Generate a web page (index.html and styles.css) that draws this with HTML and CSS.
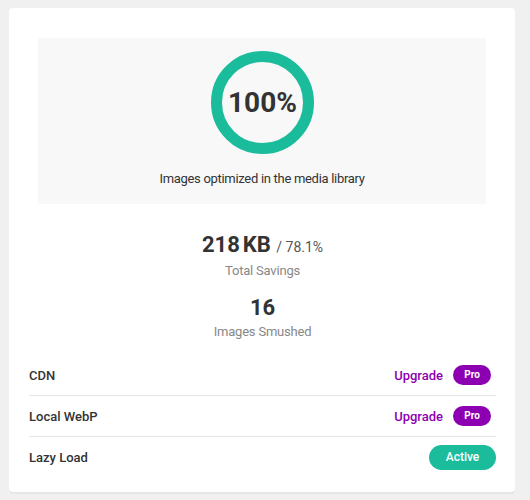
FILE: index.html
```html
<!DOCTYPE html>
<html lang="en">
<head>
    <meta charset="UTF-8">
    <meta name="viewport" content="width=device-width, initial-scale=1.0">
    <title>Smush Summary</title>
    <link rel="stylesheet" href="styles.css">
</head>
<body>

<div class="card">
    <div class="score-box">
        <div class="score-ring">
            <svg width="103" height="103" viewBox="0 0 103 103">
                <circle cx="51.5" cy="51.5" r="46" fill="none" stroke="#1abc9c" stroke-width="11"/>
            </svg>
            <span class="score-value">100%</span>
        </div>
        <p class="score-label">Images optimized in the media library</p>
    </div>

    <div class="stats">
        <div class="stat">
            <div class="stat-value">218<span class="unit">KB</span> <span class="stat-extra">/ 78.1%</span></div>
            <div class="stat-label">Total Savings</div>
        </div>

        <div class="stat">
            <div class="stat-value">16</div>
            <div class="stat-label">Images Smushed</div>
        </div>
    </div>

    <div class="features">
        <div class="feature">
            <span class="feature-name">CDN</span>
            <span class="feature-action">
                <a class="upgrade" href="#">Upgrade</a>
                <span class="tag-pro">Pro</span>
            </span>
        </div>
        <div class="feature">
            <span class="feature-name">Local WebP</span>
            <span class="feature-action">
                <a class="upgrade" href="#">Upgrade</a>
                <span class="tag-pro">Pro</span>
            </span>
        </div>
        <div class="feature">
            <span class="feature-name">Lazy Load</span>
            <span class="feature-action">
                <span class="tag-active">Active</span>
            </span>
        </div>
    </div>
</div>

</body>
</html>
```

FILE: styles.css
```css
body{
    margin: 0;
    padding: 8px 15px 8px 9px;
    background-color: #f0f0f0;
    font-family: Roboto, "Open Sans", sans-serif;
    color: #333;
}

.card{
    background-color: #fff;
    border-radius: 4px;
    box-shadow: 0 2px 0 #e6e6e6;
    padding: 30px 19px 14px 20px;
    height: 484px;
    box-sizing: border-box;
}

.score-box{
    background-color: #f8f8f8;
    margin: 0 10px 0 9px;
    padding: 13px 0 17px 0;
    display: flex;
    flex-direction: column;
    align-items: center;
}

.score-ring{
    position: relative;
    width: 103px;
    height: 103px;
    margin-left: 1px;
}

.score-ring svg{
    display: block;
}

.score-value{
    position: absolute;
    left: 0;
    right: 0;
    top: 0;
    bottom: 0;
    display: flex;
    align-items: center;
    justify-content: center;
    font-size: 28px;
    font-weight: 700;
    color: #333;
}

.score-label{
    margin: 17px 0 0 0;
    font-size: 13px;
    line-height: 16px;
    letter-spacing: -0.3px;
    color: #333;
}

.stats{
    margin-top: 28px;
}

.stat{
    text-align: center;
}

.stat + .stat{
    margin-top: 16px;
}

.stat-value{
    font-size: 22px;
    font-weight: 700;
    line-height: 26px;
    color: #333;
}

.stat-value .unit{
    margin-left: 3px;
}

.stat-extra{
    font-size: 14px;
    font-weight: 400;
    color: #555;
}

.stat-label{
    margin-top: 3px;
    font-size: 13px;
    line-height: 16px;
    letter-spacing: -0.2px;
    color: #888;
}

.features{
    margin-top: 15px;
}

.feature{
    display: flex;
    align-items: center;
    justify-content: space-between;
    height: 40px;
    border-bottom: 1px solid #e6e6e6;
}

.feature:last-child{
    border-bottom: none;
}

.feature-name{
    font-size: 13px;
    font-weight: 500;
    color: #333;
}

.feature-action{
    display: flex;
    align-items: center;
    gap: 10px;
    padding-right: 5px;
}

.upgrade{
    font-size: 13px;
    font-weight: 500;
    color: #8d00b1;
    text-decoration: none;
}

.tag-pro{
    background-color: #8d00b1;
    color: #fff;
    font-size: 10px;
    font-weight: 700;
    width: 38px;
    height: 20px;
    line-height: 20px;
    text-align: center;
    border-radius: 10px;
}

.feature:last-child .feature-action{
    padding-right: 0;
}

.tag-active{
    background-color: #1abc9c;
    color: #fff;
    font-size: 12px;
    font-weight: 500;
    width: 67px;
    height: 25px;
    line-height: 25px;
    text-align: center;
    border-radius: 13px;
}
```
